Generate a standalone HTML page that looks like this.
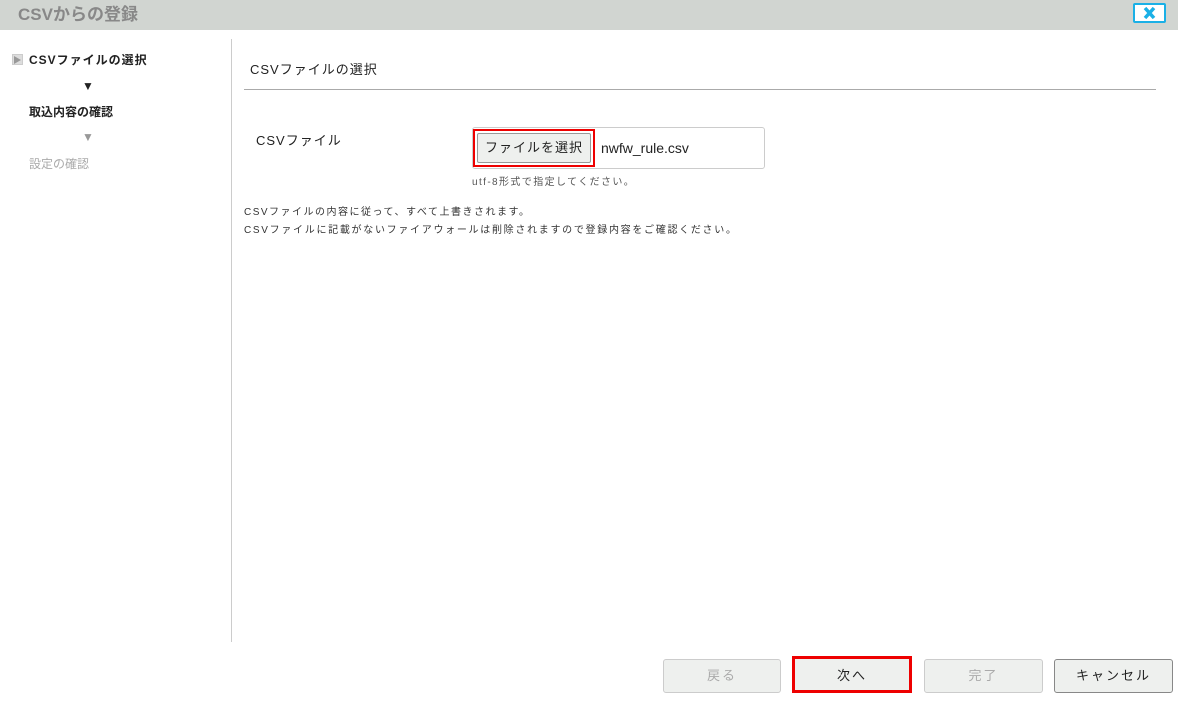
<!DOCTYPE html>
<html><head><meta charset="utf-8"><style>
*{margin:0;padding:0;box-sizing:border-box}
body{width:1178px;height:701px;background:#fff;position:relative;overflow:hidden;font-family:"Liberation Sans","Noto Sans CJK JP",sans-serif;color:#222}
.a{position:absolute;white-space:nowrap}
.hdr{left:0;top:0;width:1178px;height:30px;background:#d1d5d1}
.btn{position:absolute;height:34px;top:659px;border:1px solid #ccc;background:#eef0ee;border-radius:3px;font-size:13px;text-align:center;line-height:32px;color:#aaa;letter-spacing:2px}
</style></head><body>
<div class="a hdr"></div>
<div class="a" style="left:18px;top:4px;font-size:17px;font-weight:bold;color:#888;line-height:22px">CSVからの登録</div>
<div class="a" style="left:1133px;top:3px;width:33px;height:20px;background:#fff;border:2px solid #1ab0e6;border-radius:2px">
<svg width="29" height="16" viewBox="0 0 29 16" style="position:absolute;left:0;top:0"><path d="M10 3L19 13M19 3L10 13" stroke="#1ab0e6" stroke-width="3.5"/></svg></div>
<div class="a" style="left:12px;top:54px;width:11px;height:11px;background:#ddd;border:1px solid #ccc"></div>
<div class="a" style="left:14px;top:56px;width:0;height:0;border-left:7px solid #999;border-top:4px solid transparent;border-bottom:4px solid transparent"></div>
<div class="a" style="left:29px;top:51px;font-size:12px;font-weight:bold;letter-spacing:1px">CSVファイルの選択</div>
<div class="a" style="left:82px;top:79px;font-size:12px">▼</div>
<div class="a" style="left:29px;top:103px;font-size:12px;font-weight:bold">取込内容の確認</div>
<div class="a" style="left:82px;top:130px;font-size:12px;color:#999">▼</div>
<div class="a" style="left:29px;top:155px;font-size:12px;color:#aaa">設定の確認</div>
<div class="a" style="left:231px;top:39px;width:1px;height:603px;background:#ccc"></div>
<div class="a" style="left:250px;top:59px;font-size:13px;letter-spacing:1px">CSVファイルの選択</div>
<div class="a" style="left:244px;top:89px;width:912px;height:1px;background:#aaa"></div>
<div class="a" style="left:256px;top:130px;font-size:13px;letter-spacing:1px">CSVファイル</div>
<div class="a" style="left:472px;top:127px;width:293px;height:42px;border:1px solid #ccc;border-radius:3px"></div>
<div class="a" style="left:473px;top:129px;width:122px;height:38px;border:2px solid #e00"></div>
<div class="a" style="left:477px;top:133px;width:114px;height:30px;border:1px solid #999;background:#eef0ee;border-radius:2px;font-size:13px;text-align:center;line-height:28px;letter-spacing:1px">ファイルを選択</div>
<div class="a" style="left:601px;top:140px;font-size:14px">nwfw_rule.csv</div>
<div class="a" style="left:472px;top:173px;font-size:10px;color:#555;letter-spacing:1.4px">utf-8形式で指定してください。</div>
<div class="a" style="left:244px;top:203px;font-size:10px;color:#333;letter-spacing:1.5px">CSVファイルの内容に従って、すべて上書きされます。</div>
<div class="a" style="left:244px;top:221px;font-size:10px;color:#333;letter-spacing:1.7px">CSVファイルに記載がないファイアウォールは削除されますので登録内容をご確認ください。</div>
<div class="btn" style="left:663px;width:118px">戻る</div>
<div class="btn" style="left:792px;width:120px;height:37px;top:656px;border:3px solid #e00;border-radius:0;color:#222;line-height:33px">次へ</div>
<div class="btn" style="left:924px;width:119px">完了</div>
<div class="btn" style="left:1054px;width:119px;border-color:#888;color:#222">キャンセル</div>
</body></html>
